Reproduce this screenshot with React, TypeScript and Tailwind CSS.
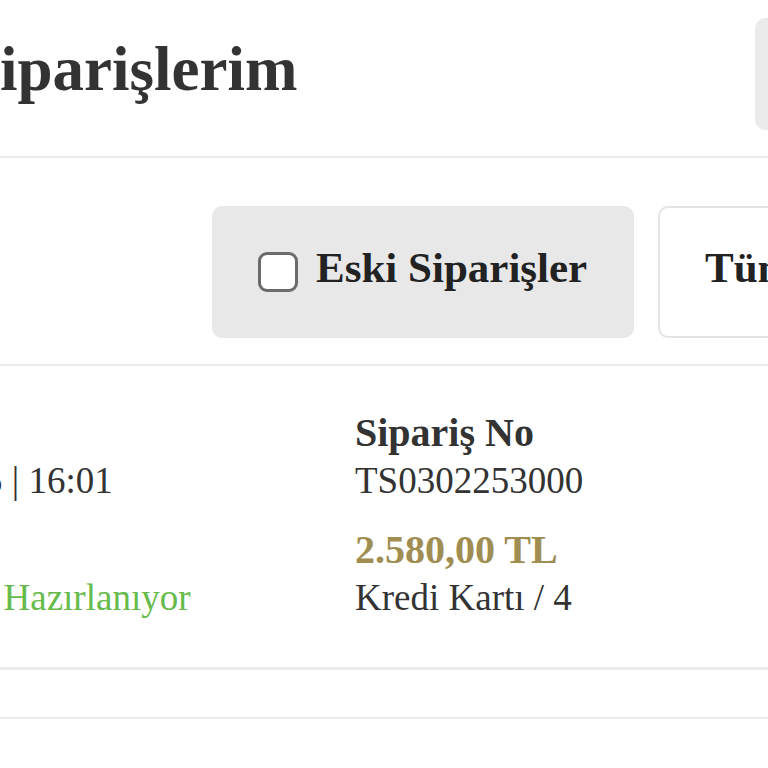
import { useState } from "react";

// Order history page (cropped view)
export default function App() {
  const [showOld, setShowOld] = useState(false);

  return (
    <div className="w-[768px] h-[768px] overflow-hidden bg-white text-[#333] font-['Liberation_Serif',serif]">
      <div className="-ml-[200px] w-[1400px]">
        {/* Header */}
        <div className="h-[156px] flex items-center justify-between pl-[165px] pr-[245px]">
          <h1 className="text-[63px] leading-none font-bold text-[#333] -mt-[18px]">Siparişlerim</h1>
          <button className="w-[200px] h-[112px] -mt-[8px] rounded-[10px] bg-[#ebebeb]" />
        </div>
        <div className="h-[2px] bg-[#ececec]" />

        {/* Filters */}
        <div className="flex gap-6 pl-[412px] pt-[48px] pb-[26px]">
          <button
            onClick={() => setShowOld(!showOld)}
            className="shrink-0 w-[422px] h-[132px] rounded-[10px] bg-[#e8e8e8] flex items-center gap-[18px] pl-[46px]"
          >
            <span className="w-[40px] h-[40px] rounded-[9px] border-[3px] border-[#6b6b6b] bg-white flex items-center justify-center">
              {showOld && <span className="w-[20px] h-[20px] rounded-[4px] bg-[#333]" />}
            </span>
            <span className="text-[43px] font-bold text-[#222] leading-none pb-[10px]">Eski Siparişler</span>
          </button>
          <button className="shrink-0 w-[400px] h-[132px] rounded-[10px] border-2 border-[#e4e4e4] bg-white flex items-center pl-[45px]">
            <span className="text-[43px] font-bold text-[#222] leading-none pb-[10px]">Tüm Siparişler</span>
          </button>
        </div>
        <div className="h-[2px] bg-[#ececec]" />

        {/* Order row */}
        <div className="flex pl-[36px] pt-[43px] pb-[45px] text-[37px] leading-[48px]">
          <div className="w-[519px] shrink-0 flex flex-col whitespace-nowrap">
            <div className="font-bold text-[40px]">Tarih</div>
            <div>03.02.2025 | 16:01</div>
            <div className="font-bold text-[40px] mt-[21px]">Durum</div>
            <div className="text-[#66bb4c]">Siparişiniz Hazırlanıyor</div>
          </div>
          <div className="flex flex-col whitespace-nowrap">
            <div className="font-bold text-[40px]">Sipariş No</div>
            <div>TS0302253000</div>
            <div className="font-bold text-[40px] text-[#a08d52] mt-[21px]">2.580,00 TL</div>
            <div>Kredi Kartı / 4</div>
          </div>
        </div>
        <div className="h-[3px] bg-[#ececec]" />
        <div className="h-[47px]" />
        <div className="h-[2px] bg-[#ececec]" />
      </div>
    </div>
  );
}
